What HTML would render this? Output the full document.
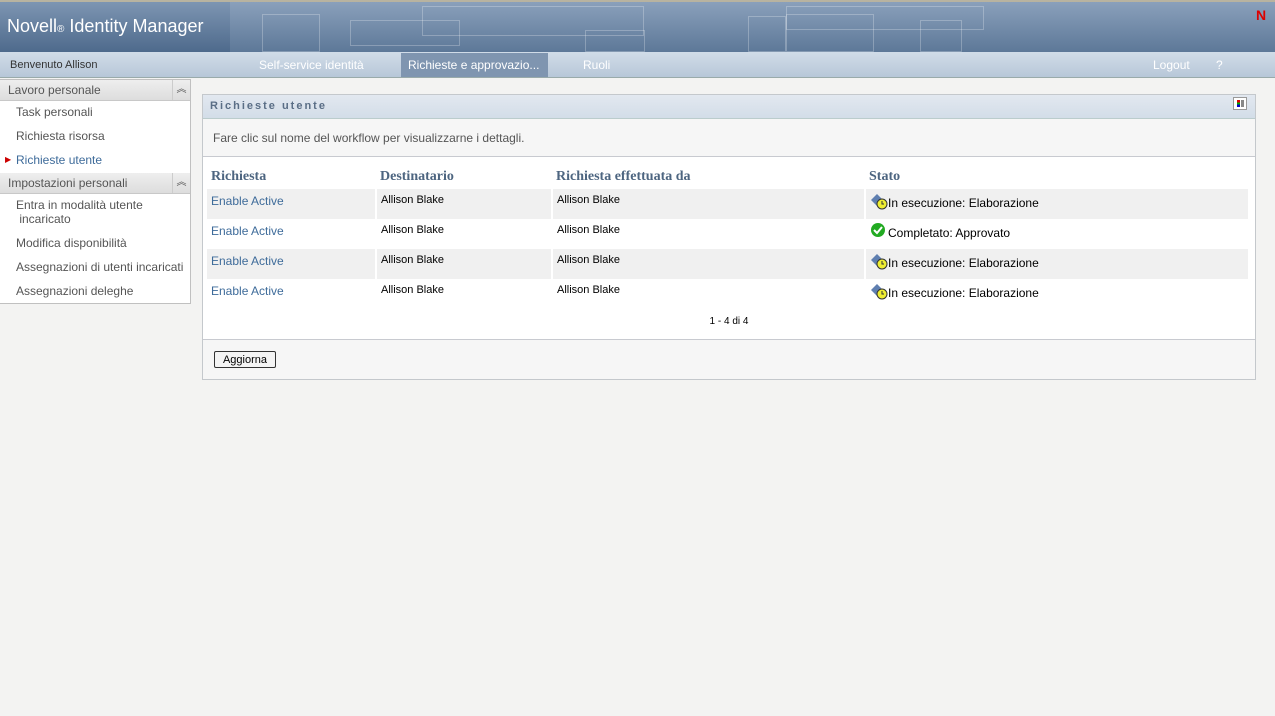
<!DOCTYPE html>
<html><head><meta charset="utf-8"><style>
*{margin:0;padding:0;box-sizing:border-box}
body{width:1275px;height:716px;background:#f3f3f2;font-family:"Liberation Sans",sans-serif;font-size:12px;position:relative;overflow:hidden}
.hdr{position:absolute;left:0;top:0;width:1275px;height:52px;background:linear-gradient(#8aa0bb,#5d7898);border-top:2px solid #b8b3a0}
.hdr .l{position:absolute;left:0;top:0;width:230px;height:50px;background:linear-gradient(#7d95b2,#4e6a8c)}
.logo{position:absolute;left:7px;top:14px;color:#fff;font-size:18px;letter-spacing:0}
.logo small{font-size:10px}
.box{position:absolute;border:1px solid rgba(255,255,255,.25)}
.nav{position:absolute;left:0;top:52px;width:1275px;height:26px;background:linear-gradient(#d1dce8,#b7c7d8);border-bottom:1px solid #9aa}
.nav span{position:absolute;top:6px;font-size:12px;color:#fff}
.side{position:absolute;left:0;top:79px;width:191px;height:225px;background:#fff;border:1px solid #c0c0c0;border-left:none}
.sh{height:21px;background:linear-gradient(#eee,#ddd);border-bottom:1px solid #c8c8c8;color:#555;padding:3px 8px;position:relative}
.sh b{position:absolute;right:0;top:0;width:18px;height:20px;border-left:1px solid #ccc;font-weight:normal;text-align:center;font-size:10px;line-height:20px}
.si{padding-left:16px;color:#555;height:24px;line-height:22px}
.panel{position:absolute;left:202px;top:94px;width:1054px;height:286px;background:#fff;border:1px solid #c4c8cc}
.ph{height:24px;background:linear-gradient(#e2e8f0,#d3dde8);border-bottom:1px solid #bcc;padding:5px 7px;color:#5a6e86;font-weight:bold;font-size:11px;letter-spacing:2px}
.desc{height:38px;background:#f6f6f6;border-bottom:1px solid #c8cad0;padding:12px 10px;color:#555}
table{position:absolute;left:4px;top:68px;width:1043px;border-collapse:collapse}
th{text-align:left;font-family:"Liberation Serif",serif;color:#4d6580;font-size:14px;height:26px;padding-left:4px;padding-top:2px}
td{height:30px;font-size:11px;padding-left:4px;vertical-align:top;padding-top:5px;border-right:2px solid #fff}
tr.g td{background:#f0f0f0}
td a{color:#3e6b9a;font-size:12px}
td.s{font-size:12px;padding-top:4px}
.ic{display:inline-block;width:18px;height:17px;vertical-align:-3px}
.foot{position:absolute;left:0;top:244px;width:1052px;height:40px;background:#f6f6f6;border-top:1px solid #c8cad0}
button{position:absolute;left:11px;top:11px;width:62px;height:17px;font-size:11px;font-family:"Liberation Sans",sans-serif;background:#f4f4f4;border:1px solid #333;border-radius:2px}
</style></head><body>
<div class="hdr"><div class="l"></div><div class="logo">Novell<small>®</small> Identity Manager</div>
<div class="box" style="left:262px;top:12px;width:58px;height:38px"></div>
<div class="box" style="left:350px;top:18px;width:110px;height:26px"></div>
<div class="box" style="left:422px;top:4px;width:222px;height:30px"></div>
<div class="box" style="left:585px;top:28px;width:60px;height:22px"></div>
<div class="box" style="left:748px;top:14px;width:38px;height:36px"></div>
<div class="box" style="left:786px;top:12px;width:88px;height:38px"></div>
<div class="box" style="left:786px;top:4px;width:198px;height:24px"></div>
<div class="box" style="left:920px;top:18px;width:42px;height:32px"></div>
<div style="position:absolute;left:1256px;top:5px;color:#d00;font-weight:bold;font-size:14px">N</div></div>
<div class="nav"><span style="left:10px;color:#333;font-size:11px;top:7px">Benvenuto Allison</span>
<span style="left:259px">Self-service identità</span>
<div style="position:absolute;left:401px;top:1px;width:147px;height:24px;background:#7f95b0"></div>
<span style="left:408px">Richieste e approvazio...</span>
<span style="left:583px">Ruoli</span><span style="left:1153px">Logout</span><span style="left:1216px">?</span></div>
<div class="side"><div class="sh">Lavoro personale<b>︽</b></div>
<div class="si">Task personali</div><div class="si">Richiesta risorsa</div>
<div class="si" style="color:#3e6b9a;position:relative"><span style="position:absolute;left:5px;color:#c00;font-size:8px">▶</span>Richieste utente</div>
<div class="sh">Impostazioni personali<b>︽</b></div>
<div class="si" style="line-height:14px;height:38px;padding-top:4px">Entra in modalità utente<br>&nbsp;incaricato</div>
<div class="si">Modifica disponibilità</div><div class="si">Assegnazioni di utenti incaricati</div><div class="si">Assegnazioni deleghe</div></div>
<div class="panel"><div class="ph">Richieste utente<span style="position:absolute;right:8px;top:2px;width:14px;height:13px;border:1px solid #999;background:#fff"><i style="position:absolute;left:3px;top:2px;width:3px;height:7px;background:linear-gradient(#d00 0 33%,#0a0 33% 66%,#00c 66%)"></i><i style="position:absolute;left:7px;top:2px;width:3px;height:7px;background:#888"></i></span></div>
<div class="desc">Fare clic sul nome del workflow per visualizzarne i dettagli.</div>
<table><tr><th style="width:169px">Richiesta</th><th style="width:176px">Destinatario</th><th style="width:313px">Richiesta effettuata da</th><th>Stato</th></tr>
<tr class="g"><td><a>Enable Active</a></td><td>Allison Blake</td><td>Allison Blake</td><td class="s"><svg class="ic"><path d="M1 7 L7 1 L13 7 L7 13Z" fill="#5f7fb0"/><circle cx="12" cy="11" r="5" fill="#ee3" stroke="#333"/><path d="M12 8v3h2" stroke="#333" fill="none"/></svg>In esecuzione: Elaborazione</td></tr>
<tr><td><a>Enable Active</a></td><td>Allison Blake</td><td>Allison Blake</td><td class="s"><svg class="ic"><circle cx="8" cy="7" r="7" fill="#2a2"/><path d="M4 7 L7 10 L12 4" stroke="#fff" stroke-width="2" fill="none"/></svg>Completato: Approvato</td></tr>
<tr class="g"><td><a>Enable Active</a></td><td>Allison Blake</td><td>Allison Blake</td><td class="s"><svg class="ic"><path d="M1 7 L7 1 L13 7 L7 13Z" fill="#5f7fb0"/><circle cx="12" cy="11" r="5" fill="#ee3" stroke="#333"/><path d="M12 8v3h2" stroke="#333" fill="none"/></svg>In esecuzione: Elaborazione</td></tr>
<tr><td><a>Enable Active</a></td><td>Allison Blake</td><td>Allison Blake</td><td class="s"><svg class="ic"><path d="M1 7 L7 1 L13 7 L7 13Z" fill="#5f7fb0"/><circle cx="12" cy="11" r="5" fill="#ee3" stroke="#333"/><path d="M12 8v3h2" stroke="#333" fill="none"/></svg>In esecuzione: Elaborazione</td></tr>
</table>
<div style="position:absolute;left:0;width:1052px;top:221px;text-align:center;font-size:10px">1 - 4 di 4</div>
<div class="foot"><button>Aggiorna</button></div></div>
</body></html>
